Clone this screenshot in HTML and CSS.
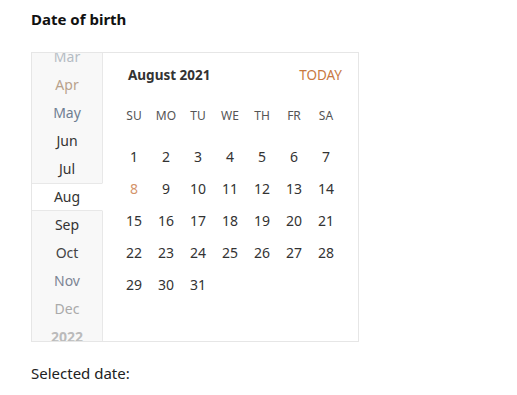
FILE: index.html
```html
<!DOCTYPE html>
<html>
<head>
<meta charset="utf-8">
<link rel="stylesheet" href="styles.css">
</head>
<body>
<div class="page">
  <h1 class="title">Date of birth</h1>
  <div class="picker">
    <div class="months">
      <div class="months-list">
        <div class="month m-mar">Mar</div>
        <div class="month m-apr">Apr</div>
        <div class="month m-may">May</div>
        <div class="month m-dark">Jun</div>
        <div class="month m-dark">Jul</div>
        <div class="month m-dark m-selected">Aug</div>
        <div class="month m-dark">Sep</div>
        <div class="month m-oct">Oct</div>
        <div class="month m-nov">Nov</div>
        <div class="month m-dec">Dec</div>
        <div class="month m-year">2022</div>
      </div>
    </div>
    <div class="calendar">
      <div class="cal-head">
        <span class="cal-title">August 2021</span>
        <span class="cal-today">TODAY</span>
      </div>
      <div class="grid weekdays">
        <span>SU</span><span>MO</span><span>TU</span><span>WE</span><span>TH</span><span>FR</span><span>SA</span>
      </div>
      <div class="grid days">
        <span>1</span><span>2</span><span>3</span><span>4</span><span>5</span><span>6</span><span>7</span>
        <span class="today">8</span><span>9</span><span>10</span><span>11</span><span>12</span><span>13</span><span>14</span>
        <span>15</span><span>16</span><span>17</span><span>18</span><span>19</span><span>20</span><span>21</span>
        <span>22</span><span>23</span><span>24</span><span>25</span><span>26</span><span>27</span><span>28</span>
        <span>29</span><span>30</span><span>31</span>
      </div>
    </div>
  </div>
  <p class="selected">Selected date:</p>
</div>
</body>
</html>
```

FILE: styles.css
```css
* { box-sizing: border-box; }
html, body { margin: 0; padding: 0; background: #fff; }
body {
  font-family: "Noto Sans", "Open Sans", sans-serif;
  font-size: 14px;
  color: #222;
}
.page {
  padding: 9px 0 0 31px;
}
.title {
  margin: 0;
  font-size: 15px;
  font-weight: 700;
  line-height: 20px;
  color: #111;
}
.picker {
  margin-top: 23px;
  width: 328px;
  height: 290px;
  border: 1px solid #e6e6e6;
  display: flex;
  overflow: hidden;
}
.months {
  width: 71px;
  flex: none;
  background: #f8f8f8;
  overflow: hidden;
}
.months-list {
  margin-top: -10px;
}
.month {
  height: 28px;
  line-height: 28px;
  text-align: center;
  border-right: 1px solid #e8e8e8;
}
.m-mar { color: #b5bcc4; }
.m-apr { color: #b8a28c; }
.m-may { color: #6f7e92; }
.m-dark { color: #333; }
.m-oct { color: #444; }
.m-nov { color: #7c8594; }
.m-dec { color: #aaa; }
.m-year { color: #bbb; font-weight: 700; }
.m-selected {
  background: #fff;
  border-top: 1px solid #e8e8e8;
  border-bottom: 1px solid #e8e8e8;
  border-right-color: #fff;
  line-height: 26px;
}
.calendar {
  flex: 1;
  padding: 10px 16px 0 15px;
}
.cal-head {
  display: flex;
  justify-content: space-between;
  align-items: center;
  height: 24px;
  padding-left: 10px;
}
.cal-title {
  font-weight: 700;
  font-size: 13.5px;
  color: #333;
}
.cal-today {
  font-size: 13.5px;
  color: #c8793f;
}
.grid {
  display: grid;
  grid-template-columns: repeat(7, 32px);
  text-align: center;
}
.weekdays {
  margin-top: 21px;
  font-size: 12px;
  line-height: 16px;
  color: #555;
}
.days {
  margin-top: 17px;
  grid-auto-rows: 32px;
  line-height: 32px;
  color: #333;
}
.days .today { color: #d4946a; }
.selected {
  margin: 21px 0 0;
  font-size: 15px;
  line-height: 20px;
  color: #222;
}
```
